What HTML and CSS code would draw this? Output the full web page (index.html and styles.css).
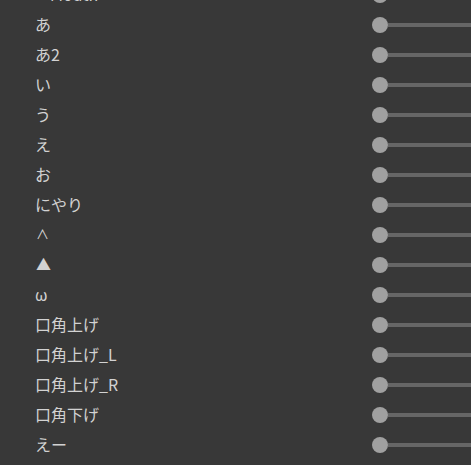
FILE: index.html
```html
<!DOCTYPE html>
<html lang="ja">
<head>
    <meta charset="UTF-8">
    <title>Mouth</title>
    <link rel="stylesheet" href="styles.css">
</head>
<body>
    <div class="panel">
        <div class="row header">
            <span class="label">Mouth</span>
            <div class="slider"><span class="knob"></span><span class="track"></span></div>
        </div>
        <div class="row"><span class="label">あ</span><div class="slider"><span class="knob"></span><span class="track"></span></div></div>
        <div class="row"><span class="label">あ2</span><div class="slider"><span class="knob"></span><span class="track"></span></div></div>
        <div class="row"><span class="label">い</span><div class="slider"><span class="knob"></span><span class="track"></span></div></div>
        <div class="row"><span class="label">う</span><div class="slider"><span class="knob"></span><span class="track"></span></div></div>
        <div class="row"><span class="label">え</span><div class="slider"><span class="knob"></span><span class="track"></span></div></div>
        <div class="row"><span class="label">お</span><div class="slider"><span class="knob"></span><span class="track"></span></div></div>
        <div class="row"><span class="label">にやり</span><div class="slider"><span class="knob"></span><span class="track"></span></div></div>
        <div class="row"><span class="label small">∧</span><div class="slider"><span class="knob"></span><span class="track"></span></div></div>
        <div class="row"><span class="label tri">▲</span><div class="slider"><span class="knob"></span><span class="track"></span></div></div>
        <div class="row"><span class="label">ω</span><div class="slider"><span class="knob"></span><span class="track"></span></div></div>
        <div class="row"><span class="label">口角上げ</span><div class="slider"><span class="knob"></span><span class="track"></span></div></div>
        <div class="row"><span class="label">口角上げ_L</span><div class="slider"><span class="knob"></span><span class="track"></span></div></div>
        <div class="row"><span class="label">口角上げ_R</span><div class="slider"><span class="knob"></span><span class="track"></span></div></div>
        <div class="row"><span class="label">口角下げ</span><div class="slider"><span class="knob"></span><span class="track"></span></div></div>
        <div class="row"><span class="label">えー</span><div class="slider"><span class="knob"></span><span class="track"></span></div></div>
    </div>
</body>
</html>
```

FILE: styles.css
```css
html,
body {
    margin: 0;
    height: 100%;
    overflow: hidden;
    background-color: #383838;
}

body {
    font-family: "Noto Sans CJK JP", "Noto Sans", sans-serif;
    font-size: 16px;
    color: #d2d2d2;
}

.panel {
    margin-top: -21px;
}

.row {
    height: 30px;
    display: grid;
    grid-template-columns: 337px 1fr;
    align-items: center;
    padding-left: 35px;
}

.header .label {
    padding-left: 15px;
}

.label {
    line-height: 30px;
    white-space: nowrap;
}

.label.small {
    font-size: 13px;
    padding-left: 1px;
}

.label.tri {
    font-size: 15px;
    padding-left: 1px;
}

.slider {
    display: flex;
    align-items: center;
    margin-top: 1px;
}

.knob {
    width: 16px;
    height: 16px;
    border-radius: 50%;
    background-color: #a0a0a0;
    flex: none;
}

.track {
    flex: 1;
    height: 4px;
    background-color: #666666;
}
```
